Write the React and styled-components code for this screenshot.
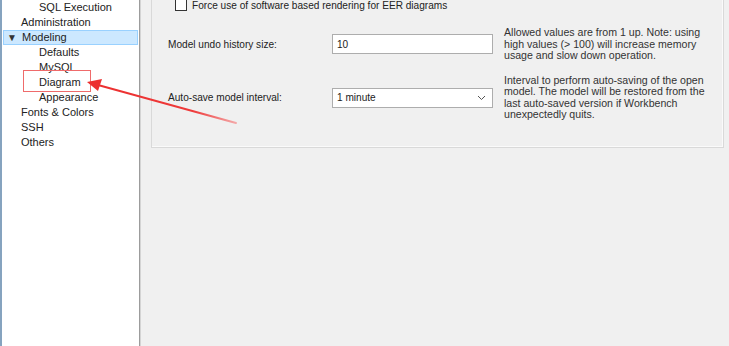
import React from "react";
import styled, { createGlobalStyle } from "styled-components";

const Global = createGlobalStyle`
  html, body { margin: 0; padding: 0; background: #f0f0f0; }
  body { font-family: "Liberation Sans", Arial, sans-serif; color: #222; }
`;

const Page = styled.div`
  position: relative;
  display: flex;
  width: 729px;
  height: 346px;
  overflow: hidden;
  background: #f0f0f0;
`;

const Sidebar = styled.div`
  width: 137px;
  flex: none;
  background: #fff;
  border-left: 2px solid #86a3bf;
  border-right: 1px solid #9c9c9c;
  box-shadow: 1px 0 0 #d4d4d4;
  display: flex;
  flex-direction: column;
`;

const TreeItem = styled.div`
  height: 15px;
  margin: 0 1px;
  display: flex;
  align-items: center;
  padding-left: ${(p) => (p.$child ? 36 : 18)}px;
  font-size: 11px;
  line-height: 15px;
  color: #222;
  white-space: nowrap;
  box-sizing: border-box;
  ${(p) =>
    p.$selected &&
    `background:#cce8ff; border:1px solid #99d1ff; padding-left:3px;`}
`;

const Caret = styled.span`
  font-size: 10px;
  width: 15px;
  color: #333;
`;

const Main = styled.div`
  flex: 1;
  min-width: 0;
  padding: 0 5px 0 11px;
`;

const GroupBox = styled.div`
  height: 147px;
  border: 1px solid #d9d9d9;
  border-top: none;
  box-shadow: inset -1px -1px 0 #fafafa;
  padding: 0 0 0 16px;
`;

const CheckRow = styled.div`
  display: flex;
  align-items: center;
  gap: 5px;
  padding-left: 7px;
  height: 11px;
  font-size: 10.1px;
  color: #222;
`;

const CheckBox = styled.span`
  width: 10px;
  height: 10px;
  border: 1px solid #333;
  background: #fff;
  margin-top: -1px;
`;

const FormGrid = styled.div`
  display: grid;
  grid-template-columns: 153px 161px 208px;
  column-gap: 11px;
  row-gap: 13px;
  align-items: center;
  margin-top: 16px;
`;

const Label = styled.div`
  font-size: 10.1px;
  color: #222;
`;

const Field = styled.div`
  height: 20px;
  box-sizing: border-box;
  border: 1px solid #adadad;
  background: #fff;
  display: flex;
  align-items: center;
  justify-content: space-between;
  padding: 0 6px 0 4px;
  font-size: 10.1px;
  color: #222;
`;

const Help = styled.div`
  font-size: 10.6px;
  line-height: 11.5px;
  color: #333;
`;

const Overlay = styled.svg`
  position: absolute;
  left: 0;
  top: 0;
  pointer-events: none;
`;

const tree = [
  { t: "SQL Execution", child: true },
  { t: "Administration" },
  { t: "Modeling", selected: true },
  { t: "Defaults", child: true },
  { t: "MySQL", child: true },
  { t: "Diagram", child: true },
  { t: "Appearance", child: true },
  { t: "Fonts & Colors" },
  { t: "SSH" },
  { t: "Others" },
];

export default function App() {
  return (
    <Page>
      <Global />
      <Sidebar>
        {tree.map((it) => (
          <TreeItem key={it.t} $child={it.child} $selected={it.selected}>
            {it.selected && <Caret>▼</Caret>}
            {it.t}
          </TreeItem>
        ))}
      </Sidebar>
      <Main>
        <GroupBox>
          <CheckRow>
            <CheckBox />
            Force use of software based rendering for EER diagrams
          </CheckRow>
          <FormGrid>
            <Label>Model undo history size:</Label>
            <Field>10</Field>
            <Help>
              Allowed values are from 1 up. Note: using high values (&gt; 100)
              will increase memory usage and slow down operation.
            </Help>
            <Label>Auto-save model interval:</Label>
            <Field>
              1 minute
              <svg width="9" height="6" viewBox="0 0 9 6">
                <path d="M1 1 L4.5 4.5 L8 1" fill="none" stroke="#555" strokeWidth="1" />
              </svg>
            </Field>
            <Help>
              Interval to perform auto-saving of the open model. The model will
              be restored from the last auto-saved version if Workbench
              unexpectedly quits.
            </Help>
          </FormGrid>
        </GroupBox>
      </Main>
      <Overlay width="729" height="346" viewBox="0 0 729 346">
        <defs>
          <linearGradient id="fade" x1="92" y1="83" x2="236" y2="123" gradientUnits="userSpaceOnUse">
            <stop offset="0" stopColor="#ec2f2f" />
            <stop offset="0.7" stopColor="#ee3a3a" />
            <stop offset="1" stopColor="#f4a8a8" />
          </linearGradient>
        </defs>
        <rect x="23.5" y="70.5" width="67" height="21" fill="none" stroke="#ef6b6b" strokeWidth="1" />
        <path d="M98 85 L236 123" stroke="url(#fade)" strokeWidth="2" fill="none" strokeLinecap="round" />
        <path d="M87 82 L102 79 L98 91 Z" fill="#ec2f2f" />
      </Overlay>
    </Page>
  );
}
